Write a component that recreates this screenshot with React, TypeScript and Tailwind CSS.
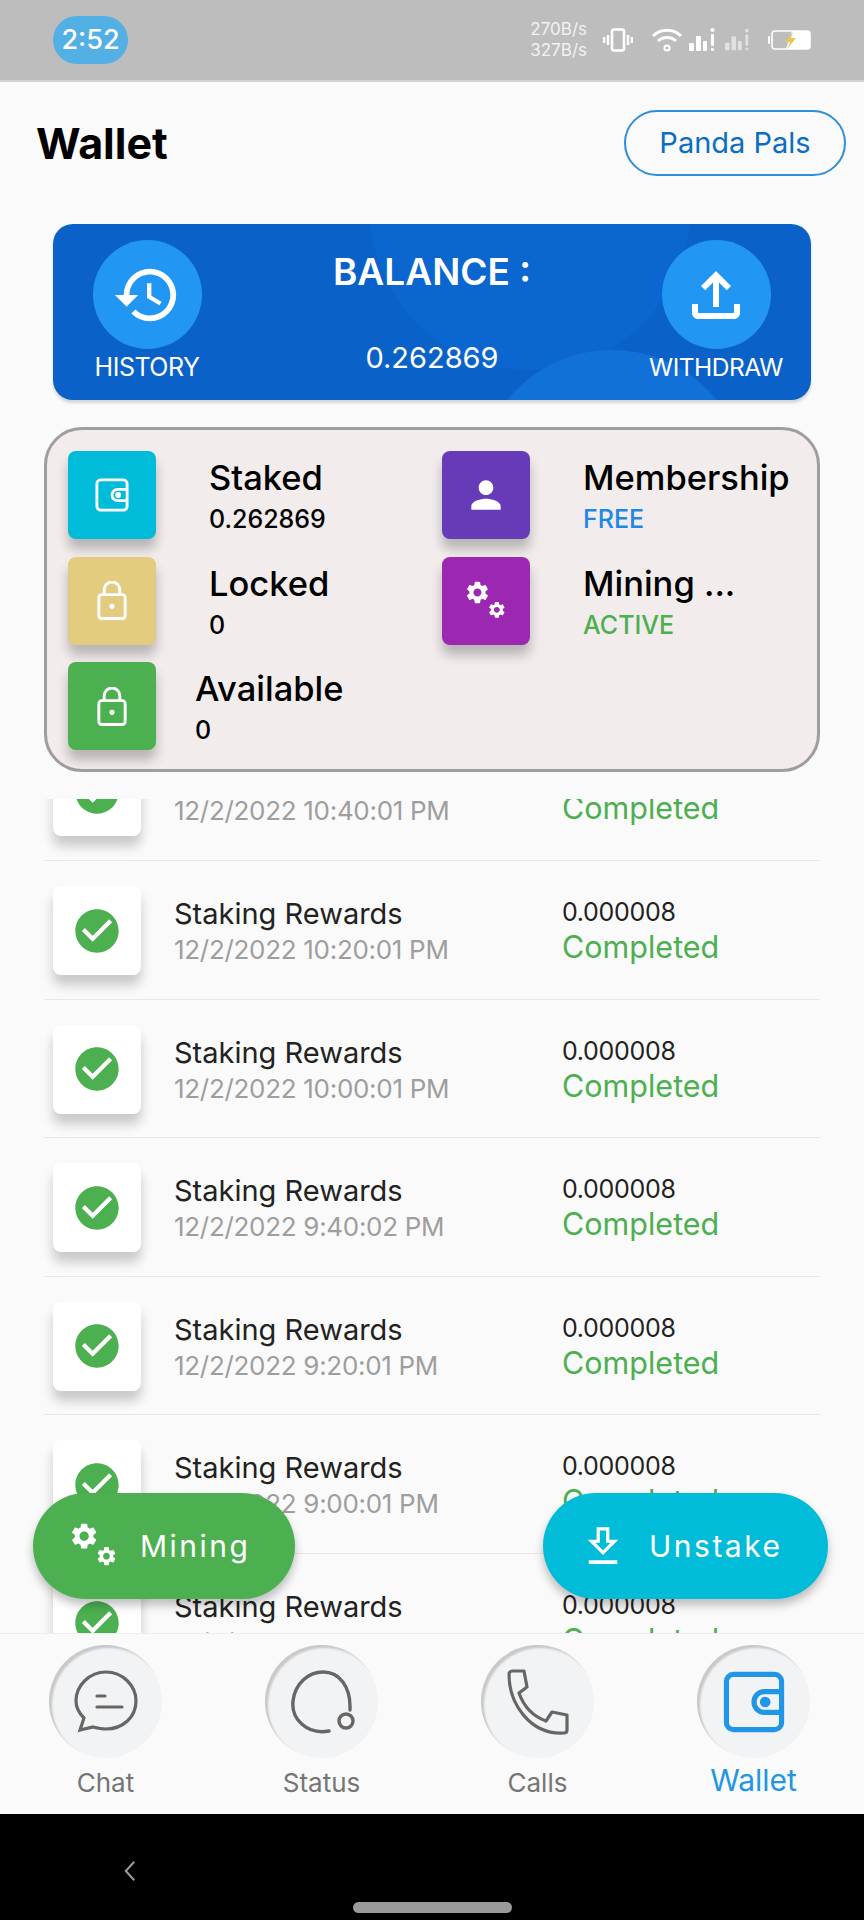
import { MdCheckCircle, MdHistory, MdOutlineFileUpload, MdPerson } from 'react-icons/md'

const rows = [
  { date: '12/2/2022 10:40:01 PM' },
  { date: '12/2/2022 10:20:01 PM' },
  { date: '12/2/2022 10:00:01 PM' },
  { date: '12/2/2022 9:40:02 PM' },
  { date: '12/2/2022 9:20:01 PM' },
  { date: '12/2/2022 9:00:01 PM' },
  { date: '12/2/2022 8:40:01 PM' },
]

const gear =
  'M19.14 12.94c.04-.3.06-.61.06-.94 0-.32-.02-.64-.07-.94l2.03-1.58c.18-.14.23-.41.12-.61l-1.92-3.32c-.12-.22-.37-.29-.59-.22l-2.39.96c-.5-.38-1.03-.7-1.62-.94l-.36-2.54c-.04-.24-.24-.41-.48-.41h-3.84c-.24 0-.43.17-.47.41l-.36 2.54c-.59.24-1.13.57-1.62.94l-2.39-.96c-.22-.08-.47 0-.59.22L2.74 8.87c-.12.21-.08.47.12.61l2.03 1.58c-.05.3-.09.63-.09.94s.02.64.07.94l-2.03 1.58c-.18.14-.23.41-.12.61l1.92 3.32c.12.22.37.29.59.22l2.39-.96c.5.38 1.03.7 1.62.94l.36 2.54c.05.24.24.41.48.41h3.84c.24 0 .44-.17.47-.41l.36-2.54c.59-.24 1.13-.56 1.62-.94l2.39.96c.22.08.47 0 .59-.22l1.92-3.32c.12-.22.07-.47-.12-.61l-2.01-1.58zM12 15.6c-1.98 0-3.6-1.62-3.6-3.6s1.62-3.6 3.6-3.6 3.6 1.62 3.6 3.6-1.62 3.6-3.6 3.6z'

function GearsIcon({ className }: { className: string }) {
  return (
    <svg viewBox="0 0 40 40" fill="white" className={className}>
      <g transform="translate(-2 -2) scale(1.12)">
        <path d={gear} />
      </g>
      <g transform="translate(21 19) scale(0.82)">
        <path d={gear} />
      </g>
    </svg>
  )
}

function WalletIcon({ className }: { className: string }) {
  return (
    <svg viewBox="0 0 36 36" fill="none" stroke="currentColor" strokeWidth="3" className={className}>
      <rect x="2" y="2" width="32" height="32" rx="4" />
      <path d="M34 12h-10a6 6 0 0 0 0 12h10" />
      <circle cx="24.5" cy="18" r="1.6" fill="currentColor" />
    </svg>
  )
}

function LockIcon() {
  return (
    <svg viewBox="0 0 30 40" fill="none" stroke="white" strokeWidth="3" className="w-[30px] h-[39px]">
      <rect x="1.5" y="14" width="27" height="24.5" rx="3" />
      <path d="M7 14V9a8 8 0 0 1 16 0v5" />
      <circle cx="15" cy="26" r="2.6" fill="white" stroke="none" />
    </svg>
  )
}

function StatusBar() {
  return (
    <div className="h-[82px] shrink-0 bg-[#bcbdbc] border-b-2 border-[#d4d4d4] flex items-center pl-[53px] pr-[53px] text-white">
      <div className="w-[75px] h-[48px] rounded-[24px] bg-[#52b0e4] flex items-center justify-center text-[27px] font-medium">2:52</div>
      <div className="ml-auto text-right text-[17px] leading-[21px] text-[#f2f2f2] mr-[16px]">
        <div>270B/s</div>
        <div>327B/s</div>
      </div>
      <svg viewBox="0 0 30 24" fill="none" stroke="white" strokeWidth="2.6" className="w-[30px] h-[24px] mr-[19px]">
        <rect x="9" y="1.5" width="12" height="21" rx="2" />
        <path d="M5 7v10M1 9v6M25 7v10M29 9v6" />
      </svg>
      <svg viewBox="0 0 30 24" fill="none" stroke="white" strokeWidth="3" className="w-[30px] h-[24px] mr-[6px]">
        <path d="M1 8a20 20 0 0 1 28 0M6 13a13 13 0 0 1 18 0" />
        <circle cx="15" cy="20" r="2.6" strokeWidth="2" />
      </svg>
      <svg viewBox="0 0 30 24" fill="white" className="w-[30px] h-[24px] mr-[6px]">
        <rect x="1" y="15" width="5" height="8" rx="1" />
        <rect x="8" y="8" width="5" height="15" rx="1" />
        <rect x="15" y="13" width="4" height="10" rx="1" />
        <rect x="23" y="6" width="3" height="12" rx="1" />
        <rect x="23" y="20" width="3" height="3" rx="1" />
        <circle cx="24.5" cy="2" r="2" />
      </svg>
      <svg viewBox="0 0 30 24" fill="white" opacity="0.55" className="w-[28px] h-[24px] mr-[16px]">
        <rect x="1" y="15" width="5" height="8" rx="1" />
        <rect x="8" y="8" width="5" height="15" rx="1" />
        <rect x="15" y="13" width="4" height="10" rx="1" />
        <rect x="23" y="6" width="3" height="12" rx="1" />
        <rect x="23" y="20" width="3" height="3" rx="1" />
        <circle cx="24.5" cy="2" r="2" />
      </svg>
      <svg viewBox="0 0 43 20" className="w-[43px] h-[20px]">
        <rect x="4" y="1" width="38" height="18" rx="3" fill="none" stroke="white" strokeWidth="1.6" />
        <rect x="0" y="6" width="2" height="8" rx="1" fill="white" />
        <path d="M24 1h16a2 2 0 0 1 2 2v14a2 2 0 0 1-2 2H18z" fill="white" />
        <path d="M25 2l-8 10h5l-3 7 9-11h-5z" fill="#e6c75a" />
      </svg>
    </div>
  )
}

function BalanceCard() {
  return (
    <div className="relative mx-[53px] h-[176px] rounded-[20px] bg-[#0a62c9] overflow-hidden shadow-[0_3px_3px_rgba(0,0,0,0.15)] text-white">
      <div className="absolute left-[317px] top-[-174px] w-[320px] h-[320px] rounded-full bg-[#0b66cf]" />
      <div className="absolute left-[424px] top-[126px] w-[270px] h-[270px] rounded-full bg-[#1271d8]" />
      <div className="relative flex h-full pt-[16px]">
        <div className="w-[186px] flex flex-col items-center pl-[2px]">
          <div className="w-[109px] h-[109px] rounded-full bg-[#2196f3] flex items-center justify-center">
            <MdHistory className="w-[70px] h-[70px]" />
          </div>
          <div className="text-[25px] leading-[32px] mt-[2px] tracking-[-0.5px]">HISTORY</div>
        </div>
        <div className="flex-1 flex flex-col items-center pr-[10px]">
          <div className="text-[37px] leading-[44px] font-semibold mt-[10px]">BALANCE :</div>
          <div className="text-[29px] leading-[36px] mt-[46px]">0.262869</div>
        </div>
        <div className="w-[176px] flex flex-col items-center pr-[14px]">
          <div className="w-[109px] h-[109px] rounded-full bg-[#2196f3] flex items-center justify-center">
            <MdOutlineFileUpload className="w-[72px] h-[72px]" />
          </div>
          <div className="text-[24.5px] leading-[32px] mt-[2px] tracking-[-0.5px]">WITHDRAW</div>
        </div>
      </div>
    </div>
  )
}

function StatCell({ color, icon, title, sub, subColor, gap }: { color: string; icon: React.ReactNode; title: string; sub: string; subColor: string; gap: string }) {
  return (
    <div className="flex items-start">
      <div className={`w-[88px] h-[88px] rounded-[8px] flex items-center justify-center shrink-0 shadow-[0_10px_12px_rgba(0,0,0,0.24)] ${color}`}>{icon}</div>
      <div className={`pt-[7px] ${gap}`}>
        <div className="text-[34.5px] leading-[40px] font-medium text-black whitespace-nowrap">{title}</div>
        <div className={`text-[25px] leading-[32px] mt-[5px] font-medium ${subColor}`}>{sub}</div>
      </div>
    </div>
  )
}

function StatPanel() {
  return (
    <div className="mx-[44px] mt-[27px] h-[345px] rounded-[38px] border-[3px] border-[#9e9e9e] bg-[#f2ecec] pt-[21px] pl-[21px] grid grid-cols-[374px_1fr] gap-y-[17.5px] content-start">
      <StatCell color="bg-[#00bcd9]" icon={<WalletIcon className="w-[34px] h-[34px] text-white" />} title="Staked" sub="0.262869" subColor="text-black" gap="ml-[53px]" />
      <StatCell color="bg-[#673ab7]" icon={<MdPerson className="w-[44px] h-[44px] text-white" />} title="Membership" sub="FREE" subColor="text-[#1e88e5]" gap="ml-[53px]" />
      <StatCell color="bg-[#e3cb80]" icon={<LockIcon />} title="Locked" sub="0" subColor="text-black" gap="ml-[53px]" />
      <StatCell color="bg-[#9c27b0]" icon={<GearsIcon className="w-[40px] h-[40px]" />} title="Mining ..." sub="ACTIVE" subColor="text-[#4caf50]" gap="ml-[53px]" />
      <StatCell color="bg-[#4caf50]" icon={<LockIcon />} title="Available" sub="0" subColor="text-black" gap="ml-[39px]" />
    </div>
  )
}

function HistoryRow({ date }: { date: string }) {
  return (
    <div className="h-[138.6px] shrink-0 mx-[44px] border-b border-[#e8e8e8] flex pl-[9px] pt-[25px]">
      <div className="w-[88px] h-[89px] rounded-[8px] bg-white shadow-[0_10px_12px_rgba(0,0,0,0.2)] flex items-center justify-center shrink-0">
        <MdCheckCircle className="w-[52px] h-[52px] text-[#4caf50]" />
      </div>
      <div className="ml-[33px] w-[388px]">
        <div className="text-[29px] leading-[36px] text-[#222] mt-[10px]">Staking Rewards</div>
        <div className="text-[26px] leading-[32px] text-[#9e9e9e] mt-[2px] tracking-[-0.3px]">{date}</div>
      </div>
      <div>
        <div className="text-[25px] leading-[28px] text-[#222] mt-[12px] tracking-[-0.3px]">0.000008</div>
        <div className="text-[30.5px] leading-[38px] text-[#4caf50] mt-[2px]">Completed</div>
      </div>
    </div>
  )
}

function NavItem({ label, active, icon }: { label: string; active?: boolean; icon: React.ReactNode }) {
  return (
    <div className="w-[113px] flex flex-col items-center">
      <div className="w-[113px] h-[113px] rounded-full bg-[#f2f3f4] shadow-[inset_3px_3px_2px_#c9c9c9] flex items-center justify-center">{icon}</div>
      {active ? (
        <div className="text-[30px] leading-[38px] text-[#2196e6] mt-[3px]">{label}</div>
      ) : (
        <div className="text-[26px] leading-[34px] text-[#757575] mt-[8px]">{label}</div>
      )}
    </div>
  )
}

export default function App() {
  return (
    <div className="h-[1920px] w-[864px] flex flex-col bg-[#fafafa] overflow-hidden font-['Inter','Liberation_Sans',sans-serif]">
      <StatusBar />
      <main className="relative flex-1 min-h-0 flex flex-col">
        <div className="h-[142px] shrink-0 flex items-start pl-[36px] pr-[18px] pt-[28px]">
          <h1 className="text-[43px] leading-[66px] font-bold text-black">Wallet</h1>
          <div className="ml-auto w-[222px] h-[66px] rounded-[33px] border-2 border-[#2e8fd8] flex items-center justify-center text-[29px] text-[#0a6fc4]">Panda Pals</div>
        </div>
        <BalanceCard />
        <StatPanel />
        <div className="flex-1 min-h-0 overflow-hidden mt-[27px]">
          <div className="flex flex-col mt-[-76.6px]">
            {rows.map((row, index) => (
              <HistoryRow key={index} date={row.date} />
            ))}
          </div>
        </div>
        <div className="absolute left-[33px] bottom-[34px] w-[262px] h-[106px] rounded-[53px] bg-[#4caf50] text-white flex items-center pl-[38px] shadow-[0_6px_10px_rgba(0,0,0,0.25)]">
          <GearsIcon className="w-[46px] h-[46px]" />
          <span className="ml-[23px] text-[30px] tracking-[2.5px]">Mining</span>
        </div>
        <div className="absolute left-[543px] bottom-[34px] w-[285px] h-[106px] rounded-[53px] bg-[#00bcd9] text-white flex items-center pl-[44px] shadow-[0_6px_10px_rgba(0,0,0,0.25)]">
          <svg viewBox="0 0 32 40" fill="none" stroke="white" strokeWidth="3.4" className="w-[32px] h-[38px]">
            <path d="M11 2h10v13h7L16 27 4 15h7z" />
            <path d="M1 37h30" strokeWidth="4" />
          </svg>
          <span className="ml-[30px] text-[30px] tracking-[2.5px]">Unstake</span>
        </div>
      </main>
      <nav className="h-[181px] shrink-0 bg-[#fafafa] border-t border-[#eeeeee] pt-[11px] pl-[49px] pr-[54px] flex justify-between">
        <NavItem
          label="Chat"
          icon={
            <svg viewBox="0 0 66 66" fill="none" stroke="#666" strokeWidth="3.2" strokeLinecap="round" className="w-[66px] h-[66px]">
              <path d="M33 3c16 0 30 13 30 29S50 60 33 60c-5 0-9-1-13-2l-13 3 4-12C6 44 3 38 3 32 3 16 17 3 33 3z" />
              <path d="M24 27h8M24 38h25" />
            </svg>
          }
        />
        <NavItem
          label="Status"
          icon={
            <svg viewBox="0 0 66 66" fill="none" stroke="#666" strokeWidth="3.4" strokeLinecap="round" className="w-[66px] h-[66px]">
              <path d="M40 62C18 66 2 50 4 32 6 14 20 3 34 3c16 0 28 14 27 38" />
              <circle cx="57" cy="52" r="7" />
            </svg>
          }
        />
        <NavItem
          label="Calls"
          icon={
            <svg viewBox="0 0 66 66" fill="none" stroke="#666" strokeWidth="3.2" strokeLinejoin="round" className="w-[66px] h-[66px]">
              <path d="M4 5c0-2 2-3 4-3h11l3 16-8 6c5 14 13 23 27 28l6-9 15 3v15c0 2-1 3-3 3C26 66 4 36 4 5z" />
            </svg>
          }
        />
        <NavItem label="Wallet" active icon={<WalletIcon className="w-[66px] h-[62px] text-[#2196e6]" />} />
      </nav>
      <div className="h-[106px] shrink-0 bg-black flex flex-col items-center relative">
        <svg viewBox="0 0 16 26" fill="none" stroke="#9a9a9a" strokeWidth="2.4" className="absolute left-[123px] top-[46px] w-[14px] h-[22px]">
          <path d="M13 2L3 13l10 11" />
        </svg>
        <div className="mt-[88px] w-[159px] h-[11px] rounded-full bg-[#9a9a9a]" />
      </div>
    </div>
  )
}
